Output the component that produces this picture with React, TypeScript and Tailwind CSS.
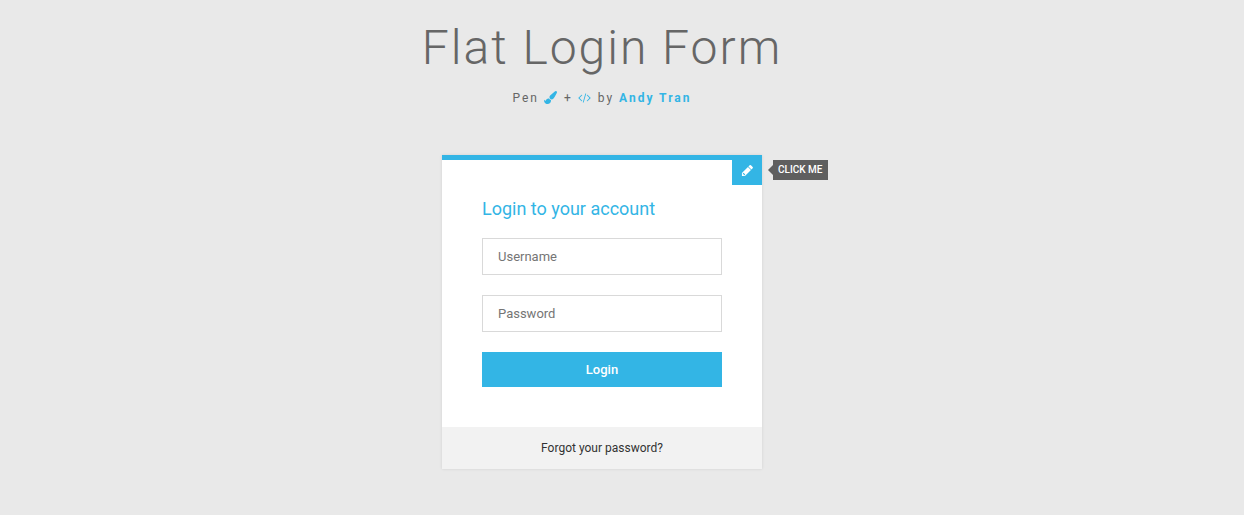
const inputClass =
  'mb-5 block w-full border border-[#d9d9d9] px-[15px] py-[10px] text-[13px] leading-[15px] text-[#666] outline-none placeholder:text-[#757575] focus:border-[#33b5e5]';

function PaintBrushIcon() {
  return (
    <svg viewBox="0 0 1792 1792" className="mr-[2px] inline-block size-[13px] align-[-2px]" fill="#33b5e5" aria-hidden="true">
      <path d="M1615 0q70 0 122.5 46.5t52.5 116.5q0 63-45 151-332 629-465 752-97 91-218 91-126 0-216.5-92.5t-90.5-219.5q0-128 92-212l638-579q59-54 130-54zm-909 1034q39 76 106.5 130t150.5 76l1 71q4 213-129.5 347t-348.5 134q-123 0-218-46.5t-152.5-127.5-86.5-183-29-220q7 5 41 30t62 44.5 59 36.5 46 17q41 0 55-37 25-66 57.5-112.5t69.5-76 88-47.5 103-25.5 125-10.5z" />
    </svg>
  );
}

function CodeIcon() {
  return (
    <svg viewBox="-64 64 1920 1792" className="mr-[2px] inline-block h-[12px] w-[13px] align-[-2px]" fill="#33b5e5" aria-hidden="true">
      <path d="M553 1399l-50 50q-10 10-23 10t-23-10l-466-466q-10-10-10-23t10-23l466-466q10-10 23-10t23 10l50 50q10 10 10 23t-10 23l-393 393 393 393q10 10 10 23t-10 23zm591-1067l-373 1291q-4 13-15.5 19.5t-23.5 2.5l-62-17q-13-4-19.5-15.5t-2.5-24.5l373-1291q4-13 15.5-19.5t23.5-2.5l62 17q13 4 19.5 15.5t2.5 24.5zm657 651l-466 466q-10 10-23 10t-23-10l-50-50q-10-10-10-23t10-23l393-393-393-393q-10-10-10-23t10-23l50-50q10-10 23-10t23 10l466 466q10 10 10 23t-10 23z" />
    </svg>
  );
}

function PencilIcon() {
  return (
    <svg viewBox="0 0 1792 1792" className="size-[13px]" fill="currentColor" aria-hidden="true">
      <path d="M491 1536l91-91-235-235-91 91v107h128v128h107zm469-1120l416 416-832 832h-416v-416zm683 96q0 53-37 90l-166 166-416-416 166-165q36-38 90-38 53 0 91 38l235 234q37 39 37 91z" />
    </svg>
  );
}

export default function App() {
  return (
    <div className="min-h-screen bg-[#e9e9e9] pr-14 pl-4 font-[Roboto,sans-serif] text-[#666]">
      <header className="pt-[19px] pb-[50px] text-center tracking-[2px]">
        <h1 className="mb-[14px] text-5xl leading-[58px] font-light">Flat Login Form</h1>
        <p className="text-xs leading-[14px]">
          Pen <PaintBrushIcon /> + <CodeIcon /> by{' '}
          <a href="#" className="font-bold text-[#33b5e5]">
            Andy Tran
          </a>
        </p>
      </header>

      <main className="relative mx-auto max-w-80 border-t-5 border-[#33b5e5] bg-white shadow-[0_0_3px_rgba(0,0,0,0.1)]">
        <button
          type="button"
          aria-label="Create an account"
          className="absolute -top-[5px] right-0 flex size-[30px] items-center justify-center bg-[#33b5e5] text-white"
        >
          <PencilIcon />
        </button>
        <div className="absolute top-0 left-full ml-[11px] bg-[#5f5f5f] px-[5px] text-[10px] leading-5 font-medium whitespace-nowrap text-white uppercase">
          <span className="absolute top-[5px] right-full border-y-5 border-r-5 border-y-transparent border-r-[#5f5f5f]" />
          Click Me
        </div>

        <form className="p-10">
          <h2 className="mb-5 text-lg leading-[18px] text-[#33b5e5]">Login to your account</h2>
          <input type="text" placeholder="Username" aria-label="Username" className={inputClass} />
          <input type="password" placeholder="Password" aria-label="Password" className={inputClass} />
          <button
            type="submit"
            className="block w-full bg-[#33b5e5] py-[10px] text-[13px] leading-[15px] font-medium text-white"
          >
            Login
          </button>
        </form>

        <div className="bg-[#f2f2f2] py-[14px] text-center text-xs leading-[14px]">
          <a href="#" className="text-[#333]">
            Forgot your password?
          </a>
        </div>
      </main>
    </div>
  );
}
